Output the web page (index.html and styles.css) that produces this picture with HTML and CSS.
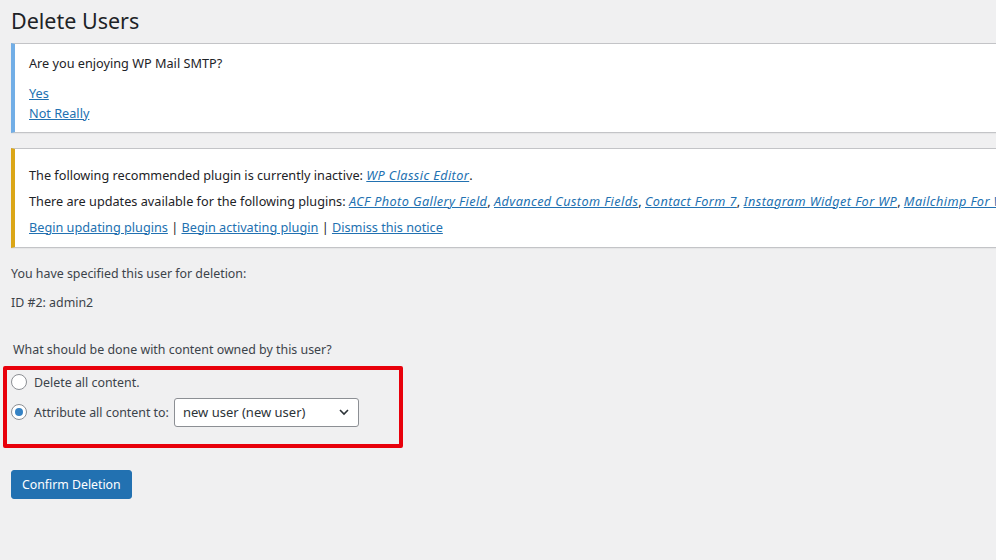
FILE: index.html
```html
<!DOCTYPE html>
<html lang="en">
<head>
    <meta charset="UTF-8">
    <title>Delete Users</title>
    <link rel="stylesheet" href="styles.css">
</head>
<body>
    <div class="wrap">
        <h1 class="page-title">Delete Users</h1>

        <div class="notice notice-info">
            <p>Are you enjoying WP Mail SMTP?</p>
            <p class="notice-links">
                <a href="#">Yes</a><br>
                <a href="#">Not Really</a>
            </p>
        </div>

        <div class="notice notice-warning">
            <p>The following recommended plugin is currently inactive: <em><a href="#">WP Classic Editor</a></em>.</p>
            <p class="nowrap">There are updates available for the following plugins: <em><a href="#">ACF Photo Gallery Field</a></em>, <em><a href="#">Advanced Custom Fields</a></em>, <em><a href="#">Contact Form 7</a></em>, <em><a href="#">Instagram Widget For WP</a></em>, <em><a href="#">Mailchimp For WordPress</a></em>.</p>
            <p><a href="#">Begin updating plugins</a> | <a href="#">Begin activating plugin</a> | <a href="#">Dismiss this notice</a></p>
        </div>

        <form class="delete-form">
            <p class="info">You have specified this user for deletion:</p>
            <p class="info">ID #2: admin2</p>

            <fieldset class="reassign">
                <p class="legend">What should be done with content owned by this user?</p>
                <label class="choice">
                    <input type="radio" name="delete_option">
                    Delete all content.
                </label>
                <label class="choice">
                    <input type="radio" name="delete_option" checked>
                    Attribute all content to:
                    <span class="select">
                        new user (new user)
                        <svg width="16" height="16" viewBox="0 0 16 16" fill="none" stroke="#2c3338" stroke-width="1.6">
                            <path d="M4 6l4 4 4-4"/>
                        </svg>
                    </span>
                </label>
                <div class="highlight"></div>
            </fieldset>

            <button type="button" class="button-primary">Confirm Deletion</button>
        </form>
    </div>
</body>
</html>
```

FILE: styles.css
```css
* {
    margin: 0;
    padding: 0;
    box-sizing: border-box;
}

html, body {
    overflow: hidden;
}

body {
    font-family: "Noto Sans", "Open Sans", sans-serif;
    font-size: 12.4px;
    line-height: 1.4;
    background-color: #f0f0f1;
    color: #3c434a;
}

a {
    color: #2271b1;
    text-decoration: underline;
}

.wrap {
    padding: 6px 0 0 11px;
}

.page-title {
    font-size: 21.5px;
    font-weight: 400;
    color: #1d2327;
    line-height: 29px;
    margin-bottom: 8px;
}

.notice {
    background: #fff;
    border: 1px solid #c3c4c7;
    border-left-width: 4px;
    margin-right: -40px;
    padding: 6px 14px 4px;
    font-size: 12.7px;
    box-shadow: 0 1px 1px rgba(0, 0, 0, 0.04);
}

.notice p {
    color: #1d2327;
    margin: 5px 0;
}

.notice em {
    letter-spacing: 0.4px;
}

.notice-info {
    border-left-color: #72aee6;
    margin-bottom: 15px;
}

.notice-info p:first-child {
    margin-bottom: 10px;
}

.notice-links {
    line-height: 20px;
}

.notice-warning {
    border-left-color: #dba617;
    padding-top: 18px;
    padding-bottom: 12px;
}

.notice-warning p {
    line-height: 16px;
    margin: 0 0 10px;
}

.notice-warning p:last-child {
    margin-bottom: 0;
}

.nowrap {
    white-space: nowrap;
}

.delete-form {
    padding-top: 17px;
}

.info {
    margin-bottom: 12px;
}

.reassign {
    border: none;
    position: relative;
    margin-top: 29px;
}

.legend {
    padding-left: 2px;
    margin-bottom: 12px;
}

.choice {
    display: flex;
    align-items: center;
    gap: 7px;
    height: 25px;
    margin-bottom: 5px;
}

.choice input {
    appearance: none;
    width: 16px;
    height: 16px;
    border: 1px solid #8c8f94;
    border-radius: 50%;
    background: #fff;
    display: grid;
    place-content: center;
}

.choice input:checked::before {
    content: '';
    width: 8px;
    height: 8px;
    border-radius: 50%;
    background: #3582c4;
}

.select {
    display: inline-flex;
    align-items: center;
    justify-content: space-between;
    width: 185px;
    height: 29px;
    padding: 0 6px 0 8px;
    margin-left: -2px;
    border: 1px solid #8c8f94;
    border-radius: 3px;
    background: #fff;
    color: #2c3338;
    font-size: 13px;
}

.highlight {
    position: absolute;
    left: -8px;
    top: 25px;
    width: 400px;
    height: 82px;
    border: 4px solid #e8000b;
    border-radius: 2px;
    pointer-events: none;
}

.button-primary {
    margin-top: 40px;
    background: #2271b1;
    border: 1px solid #2271b1;
    border-radius: 3px;
    color: #fff;
    font-family: inherit;
    font-size: 12.3px;
    height: 29px;
    padding: 0 10px;
}
```
